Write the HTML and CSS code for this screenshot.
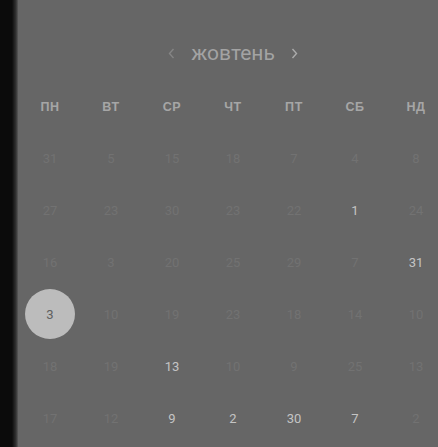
FILE: index.html
```html
<!DOCTYPE html>
<html lang="uk">
<head>
<meta charset="utf-8">
<link rel="stylesheet" href="styles.css">
</head>
<body>
<div class="page">
  <div class="edge"></div>
  <main class="cal">
    <div class="title">
      <span class="nav nav-prev"><svg width="7" height="11" viewBox="0 0 7 11"><path d="M5.5 1 L1.5 5.5 L5.5 10" fill="none" stroke="currentColor" stroke-width="1.4"/></svg></span>
      <span class="month">жовтень</span>
      <span class="nav nav-next"><svg width="7" height="11" viewBox="0 0 7 11"><path d="M1.5 1 L5.5 5.5 L1.5 10" fill="none" stroke="currentColor" stroke-width="1.4"/></svg></span>
    </div>
    <div class="grid head">
      <div>ПН</div><div>ВТ</div><div>СР</div><div>ЧТ</div><div>ПТ</div><div>СБ</div><div>НД</div>
    </div>
    <div class="grid days">
      <div>31</div><div>5</div><div>15</div><div>18</div><div>7</div><div>4</div><div>8</div>
      <div>27</div><div>23</div><div>30</div><div>23</div><div>22</div><div class="on">1</div><div>24</div>
      <div>16</div><div>3</div><div>20</div><div>25</div><div>29</div><div>7</div><div class="on">31</div>
      <div><span class="sel">3</span></div><div>10</div><div>19</div><div>23</div><div>18</div><div>14</div><div>10</div>
      <div>18</div><div>19</div><div class="on">13</div><div>10</div><div>9</div><div>25</div><div>13</div>
      <div>17</div><div>12</div><div class="on">9</div><div class="on">2</div><div class="on">30</div><div class="on">7</div><div>2</div>
    </div>
  </main>
</div>
</body>
</html>
```
FILE: styles.css
```css
html, body {
  margin: 0;
  padding: 0;
  background: #666666;
  overflow: hidden;
}
.page {
  display: flex;
  width: 438px;
  height: 447px;
  overflow: hidden;
  font-family: Roboto, "Noto Sans", sans-serif;
}
.edge {
  flex: 0 0 18px;
  background: linear-gradient(to right, #0b0b0b 0, #0b0b0b 12px, #333 16px, #5a5a5a 18px);
}
.cal {
  flex: 0 0 auto;
  padding-left: 1.5px;
}
.title {
  width: 427px;
  height: 24px;
  padding: 41px 0 16px;
  display: flex;
  align-items: center;
  justify-content: center;
  gap: 16px;
}
.month {
  font-size: 21px;
  line-height: 24px;
  color: #a3a3a3;
  font-weight: 400;
}
.nav {
  display: flex;
  align-items: center;
}
.nav-prev { color: #858585; }
.nav-next { color: #ababab; }
.grid {
  display: grid;
  grid-template-columns: repeat(7, 61px);
}
.head div {
  height: 51px;
  display: flex;
  align-items: center;
  justify-content: center;
  font-family: "Liberation Sans", Arial, sans-serif;
  font-size: 12.5px;
  font-weight: 700;
  color: #a6a6a6;
  letter-spacing: 0.6px;
}
.days div {
  height: 52px;
  display: flex;
  align-items: center;
  justify-content: center;
  font-size: 13px;
  color: #727272;
}
.days div.on {
  color: #c4c4c4;
}
.sel {
  width: 50px;
  height: 50px;
  border-radius: 50%;
  background: #bcbcbc;
  color: #606060;
  display: flex;
  align-items: center;
  justify-content: center;
}
```
